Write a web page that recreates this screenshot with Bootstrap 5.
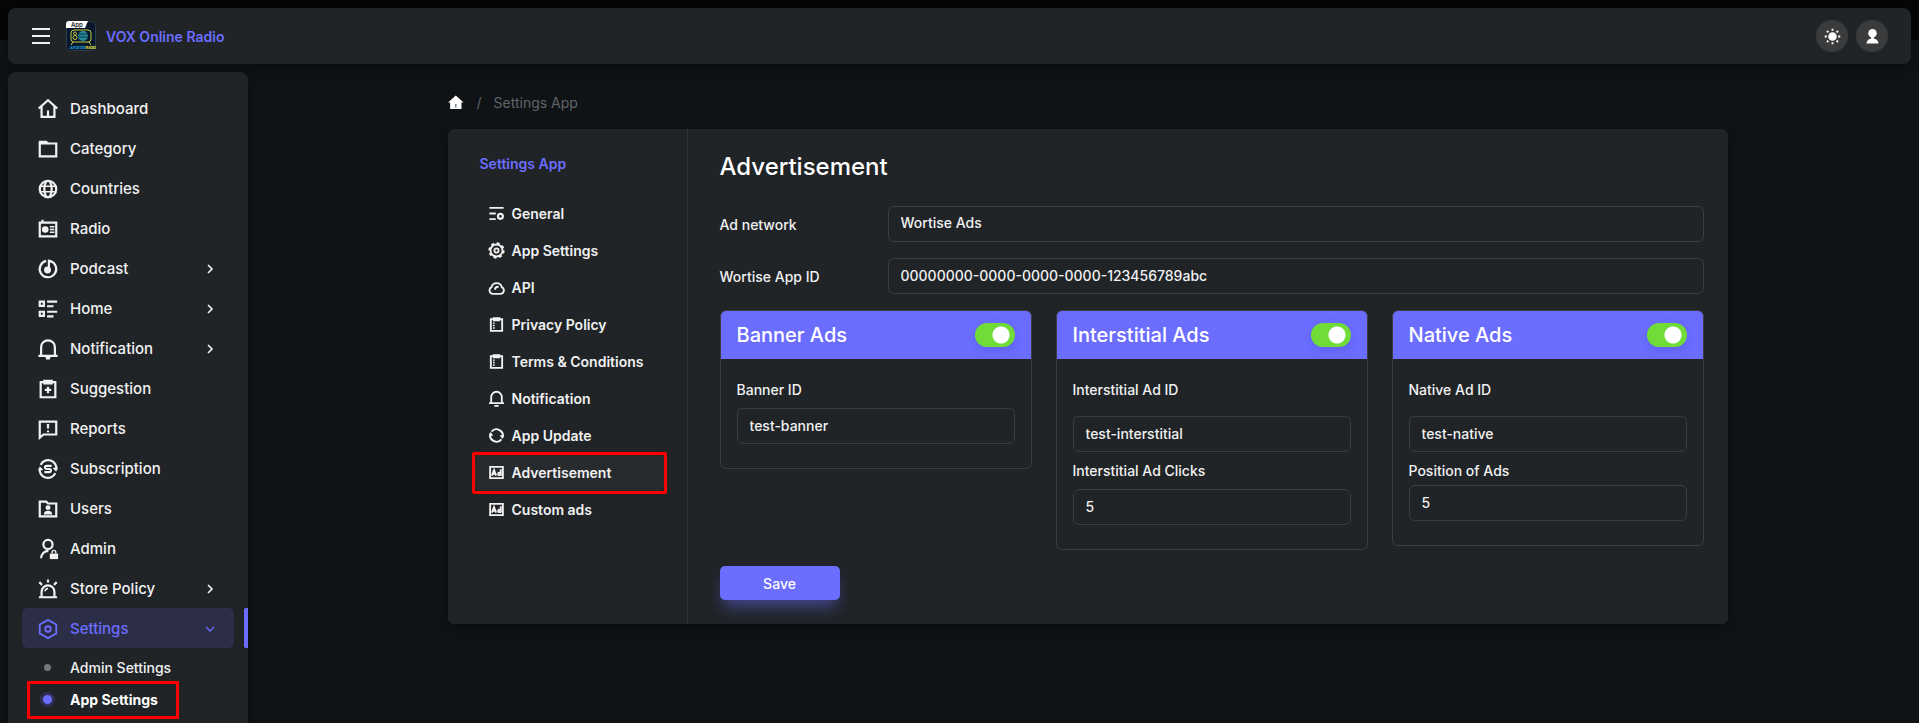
<!DOCTYPE html>
<html lang="en" data-bs-theme="dark">
<head>
<meta charset="utf-8">
<meta name="viewport" content="width=device-width, initial-scale=1">
<title>Settings App - VOX Online Radio</title>
<link href="https://cdn.jsdelivr.net/npm/bootstrap@5.3.0/dist/css/bootstrap.min.css" rel="stylesheet">
<style>
:root { --accent: #6b6dff; --panel: #202427; --line: #3a3d41; --mark-red: #ff0000; }
body { font-family: Inter, "Liberation Sans", sans-serif; font-size: 14px; font-weight: 500; line-height: 21px; color: #f1f1f2; background: linear-gradient(#050608 40px, #0f1316 40px); min-height: 100vh; }
a { color: inherit; text-decoration: none; }
h1, h2, p, ul { margin: 0; }
svg { display: block; flex: none; fill: none; stroke: currentColor; stroke-width: 2; }
.panel { background: var(--panel); box-shadow: 0 4px 12px rgba(0, 0, 0, .3); }
.topbar { height: 56px; border-radius: 8px; padding: 0 23px 0 24px; }
.menu-btn { width: 18px; height: 18px; color: #f1f1f2; }
.brand { font-weight: 600; color: var(--accent); gap: 10px; }
.round-btn { width: 32px; height: 32px; background: #3a3b3d; color: #fff; }
.side { width: 240px; border-radius: 8px 8px 0 0; padding: 16px 14px 0; }
.side-link { height: 40px; padding: 1px 16px 0 15px; gap: 11px; border-radius: 6px; font-size: 15px; }
.side-link svg { stroke-width: 2.400px; }
.side-link .go { width: 16px; height: 16px; margin-left: auto; }
.side-link.current { color: var(--accent); background: #2c2e48; }
.side-link.current svg { stroke-width: 2px; }
.side-link.current::after { content: ""; position: absolute; top: 0; right: -14px; width: 4px; height: 40px; background: var(--accent); border-radius: 2px 0 0 2px; }
.sub-link { height: 32px; padding: 0 18px 2px; gap: 15px; }
.dot { width: 15px; height: 15px; border-radius: 50%; background: #75777a; border: 4px solid var(--panel); }
.sub-link.current { font-weight: 700; color: #fff; }
.sub-link.current .dot { background: var(--accent); border: 3px solid #2f3056; }
.sub-link.current::after { content: ""; position: absolute; inset: -3px auto -3px 5px; width: 152px; border: 3px solid var(--mark-red); }
.page { width: 1280px; max-width: 100%; margin-top: 20px; }
.crumbs { color: #5f6469; font-weight: 400; height: 21px; gap: 12px; }
.card-main { border-radius: 6px; margin-top: 16px; min-height: 495px; }
.tabs { width: 240px; border-right: 1px solid #303438; padding: 24px 24px 24px 32px; }
.tabs-title { color: var(--accent); font-size: 14px; line-height: 21px; font-weight: 600; margin-bottom: 21px; }
.tab-link { height: 37px; gap: 7px; padding-left: 8px; font-weight: 600; border-radius: 6px; }
.tab-link svg { stroke-width: 2.600px; }
.tab-link.current::before { content: ""; position: absolute; inset: 0 -1px 0 -5px; background: #282b2e; border-radius: 6px; }
.tab-link.current::after { content: ""; position: absolute; inset: -2px -4px -3px -8px; border: 3px solid var(--mark-red); border-radius: 2px; }
.tab-link > * { position: relative; }
.pane { padding: 23px 24px 24px 32px; }
.pane h1 { font-size: 24px; line-height: 30px; font-weight: 500; color: #fff; margin-bottom: 24px; }
.field { height: 36px; padding: 6px 12px 8px; font-size: 14px; line-height: 20px; font-weight: 500; color: #f1f1f2; background: var(--panel); border: 1px solid var(--line); border-radius: 6px; }
.field:focus { background: var(--panel); color: #fff; border-color: var(--accent); box-shadow: none; }
select.field { background-image: none; }
.ad-card { border: 1px solid var(--line); border-radius: 6px; overflow: hidden; }
.ad-head { height: 48px; padding: 0 16px; background: var(--accent); }
.ad-head h2 { font-size: 20px; line-height: 24px; font-weight: 500; color: #fff; }
.ad-body { padding: 20px 16px 24px; }
.ad-body label { display: block; }
.form-check-input.toggle { width: 40px; height: 24px; margin: 0; border: 0; border-radius: 12px; background: #71dc37 radial-gradient(circle at 26px 12px, #fff 8px, transparent 9px) no-repeat; box-shadow: 0 3px 10px rgba(60, 60, 190, .25); }
.form-check-input.toggle:not(:checked) { background: #888 radial-gradient(circle at 14px 12px, #fff 8px, transparent 9px) no-repeat; }
.save { width: 120px; height: 34px; background: var(--accent); color: #fff; border: 0; border-radius: 5px; font-weight: 500; font-size: 14px; box-shadow: 0 10px 16px -4px rgba(107, 109, 255, .5); }
.save:hover { background: #5a5cf0; color: #fff; }
</style>
</head>
<body>
<svg width="0" height="0" class="position-absolute" aria-hidden="true">
  <symbol id="home" viewBox="0 0 24 24"><path d="M1.800 11.500 12 2.500l10.200 9M5 9v11.500h14V9M12 20.500v-7"/></symbol>
  <symbol id="folder" viewBox="0 0 24 24"><path d="M3 6v14h18V6z"/><path d="M2 3h8.500l3 3H2z" fill="currentColor" stroke="none"/></symbol>
  <symbol id="globe" viewBox="0 0 24 24"><circle cx="12" cy="12" r="9"/><ellipse cx="12" cy="12" rx="4" ry="9"/><path d="M3 9h18M3 15h18" stroke-width="1.800"/></symbol>
  <symbol id="radio" viewBox="0 0 24 24"><path d="M3 5h18v15H3zM6 5V2"/><circle cx="9" cy="12.500" r="3.600" fill="currentColor" stroke="none"/><path d="M14 9.500h5M14 12.500h5M14 15.500h5" stroke-width="1.600"/></symbol>
  <symbol id="music" viewBox="0 0 24 24"><path d="M10 3.200A9 9 0 1 0 15 3.500"/><path d="M13 13V3l3 1"/><circle cx="11.500" cy="13" r="2.600" fill="currentColor"/></symbol>
  <symbol id="list" viewBox="0 0 24 24"><path d="M3 4h4.500v4.500H3zM3 15h4.500v4.500H3zM11 4h11M11 9h7M11 15h11M11 20h7"/></symbol>
  <symbol id="bell" viewBox="0 0 24 24"><path d="M4.500 19v-9a7.500 7.500 0 0 1 15 0v9M1.500 19.500h21"/><path d="M9 20h6l-1 3.500h-4z" fill="currentColor" stroke="none"/></symbol>
  <symbol id="bell-s" viewBox="0 0 24 24"><path d="M4.500 18v-8a7.500 7.500 0 0 1 15 0v8M1.500 18.500h21M9 22.500h6"/></symbol>
  <symbol id="clip-plus" viewBox="0 0 24 24"><path d="M4 4.500h16V21H4zM8 3h8v3H8zM12 9.500v7M8.500 13h7"/></symbol>
  <symbol id="report" viewBox="0 0 24 24"><path d="M3 4h18v14H7l-4 3.500zM12 6.500v5M12 13.500v2"/></symbol>
  <symbol id="money" viewBox="0 0 24 24"><path d="M4 7.500A9 9 0 0 1 21 13M20 16.500A9 9 0 0 1 3 11"/><path d="m1.500 14 1.500-5 4 4zM22.500 10 21 15l-4-4z" fill="currentColor" stroke="none"/><path d="M16 8.500h-5.500a1.750 1.750 0 0 0 0 3.500h3a1.750 1.750 0 0 1 0 3.500H8"/></symbol>
  <symbol id="folder-user" viewBox="0 0 24 24"><path d="M3 20V4h7l2 2h9v14z"/><circle cx="12" cy="10.500" r="2.700" fill="currentColor" stroke="none"/><path d="M7.500 18a4.500 4 0 0 1 9 0z" fill="currentColor" stroke="none"/></symbol>
  <symbol id="admin" viewBox="0 0 24 24"><circle cx="12" cy="7" r="5"/><path d="M4.500 22a8 8 0 0 1 8-8"/><path d="M14 17h9v6h-9z" fill="currentColor" stroke="none"/><path d="M16.500 17v-1.500a2 2 0 0 1 4 0V17" stroke-width="1.500"/></symbol>
  <symbol id="alarm" viewBox="0 0 24 24"><path d="M5 21v-6a7 7 0 0 1 14 0v6M2 21h20M12 1.500V5M2.500 4.500l3 3M21.500 4.500l-3 3"/><path d="M8.500 14.500a4 4 0 0 1 3.500-3" stroke-width="1.600"/></symbol>
  <symbol id="hex" viewBox="0 0 24 24"><path d="m12 2 9 5v10l-9 5-9-5V7z"/><circle cx="12" cy="12" r="3"/></symbol>
  <symbol id="right" viewBox="0 0 24 24"><path d="m9 6 6 6-6 6"/></symbol>
  <symbol id="down" viewBox="0 0 24 24"><path d="m6 9 6 6 6-6"/></symbol>
  <symbol id="sliders" viewBox="0 0 24 24"><path d="M2 4h20M2 12h9M2 20h9"/><circle cx="17.500" cy="16" r="3.500" stroke-width="3"/></symbol>
  <symbol id="gear" viewBox="0 0 24 24"><circle cx="12" cy="12" r="8.500"/><circle cx="12" cy="12" r="10" stroke-width="3" stroke-dasharray="4 3.850"/><circle cx="12" cy="12" r="3"/></symbol>
  <symbol id="cloud" viewBox="0 0 24 24"><path d="M7 21a5 5 0 0 1-2-9.500 7.500 7.500 0 0 1 14.500 0A5 5 0 0 1 17 21zM10 15a4 4 0 0 1 4-4h1"/></symbol>
  <symbol id="clip-list" viewBox="0 0 24 24"><path d="M4 4.500h16V21H4zM8 3h8v3H8z"/><path d="M7 10h2.500M7 13.500h2.500M7 17h2.500" stroke-width="2"/></symbol>
  <symbol id="sync" viewBox="0 0 24 24"><path d="M5 6.500A9 9 0 0 1 20.500 15M19 17.500A9 9 0 0 1 3.500 9"/><path d="m1.500 13 2-6 4 5zM22.500 11l-2 6-4-5z" fill="currentColor" stroke="none"/></symbol>
  <symbol id="ad" viewBox="0 0 24 24"><path d="M3 4h18v16H3z"/><path d="m5.500 16.500 3-8 3 8M7 14h3.500M18 7.500v9"/><circle cx="16" cy="14" r="1.800"/></symbol>
  <symbol id="home-fill" viewBox="0 0 24 24"><path d="M11 2 0 12h3v9h16v-9h3z" fill="currentColor" stroke="none"/><path d="M11 14v5" stroke="#77797b"/></symbol>
  <symbol id="sun" viewBox="0 0 24 24"><circle cx="12" cy="12" r="6" fill="currentColor" stroke="none"/><path d="M12 1v3M12 20v3M1 12h3M20 12h3M4.200 4.200l2 2M17.800 17.800l2 2M4.200 19.800l2-2M17.800 6.200l2-2" stroke-width="2.600"/></symbol>
  <symbol id="user" viewBox="0 0 24 24"><circle cx="12" cy="7.500" r="6" fill="currentColor" stroke="none"/><path d="M10 12h4v4h-4zM3.500 22a8.500 7.500 0 0 1 17 0z" fill="currentColor" stroke="none"/></symbol>
</svg>

<div class="p-2 pb-0 d-flex flex-column min-vh-100">
  <header class="topbar panel d-flex align-items-center position-relative">
    <button class="menu-btn btn p-0 border-0" type="button" aria-label="Toggle menu"><svg width="18" height="18" viewBox="0 0 18 18"><path d="M0 2h18M0 9h18M0 16h18"/></svg></button>
    <a href="#" class="d-flex align-items-center ms-3 brand">
      <svg width="30" height="30" viewBox="0 0 30 30" stroke="none" aria-hidden="true">
        <rect x=".5" y=".5" width="29" height="29" rx="5" fill="#06182a" stroke="#2b3e4d" stroke-width="1"/>
        <rect x="5" y="9" width="20" height="12" rx="3" fill="none" stroke="#c4c943" stroke-width="1"/>
        <path d="M7 21l-2 3M23 21l2 3" stroke="#c4c943" stroke-width="1"/>
        <circle cx="17" cy="15" r="5" fill="#278b9d" stroke="none"/><path d="M12 13h10M12 16h10" stroke="#0a3240" stroke-width="1"/>
        <circle cx="9" cy="12.500" r="1.500" stroke="#c4c943" stroke-width="1"/><circle cx="9" cy="16.500" r="2" stroke="#c4c943" stroke-width="1"/>
        <path d="M0 7V3a3 3 0 0 1 3-3h19l-3 7z" fill="#fff" stroke="none"/>
        <text x="5" y="6" font-size="6" font-weight="600" fill="#222" stroke="none">App</text>
        <text x="4" y="28" font-size="4" font-weight="700" fill="#1b9fd8" stroke="none">Android<tspan fill="#e6e04a">Radio</tspan></text>
      </svg>
      <span>VOX Online Radio</span>
    </a>
    <button class="round-btn btn p-0 border-0 rounded-circle d-flex align-items-center justify-content-center ms-auto" type="button" aria-label="Switch theme"><svg width="17" height="17"><use href="#sun"/></svg></button>
    <button class="round-btn btn p-0 border-0 rounded-circle d-flex align-items-center justify-content-center ms-2" type="button" aria-label="Account"><svg width="17" height="17"><use href="#user"/></svg></button>
  </header>

  <div class="d-flex flex-grow-1 mt-2">
    <nav class="side panel flex-shrink-0" aria-label="Main">
      <ul class="list-unstyled">
        <li><a href="#" class="side-link d-flex align-items-center"><svg width="22" height="22"><use href="#home"/></svg>Dashboard</a></li>
        <li><a href="#" class="side-link d-flex align-items-center"><svg width="22" height="22"><use href="#folder"/></svg>Category</a></li>
        <li><a href="#" class="side-link d-flex align-items-center"><svg width="22" height="22"><use href="#globe"/></svg>Countries</a></li>
        <li><a href="#" class="side-link d-flex align-items-center"><svg width="22" height="22"><use href="#radio"/></svg>Radio</a></li>
        <li><a href="#" class="side-link d-flex align-items-center"><svg width="22" height="22"><use href="#music"/></svg>Podcast<svg class="go"><use href="#right"/></svg></a></li>
        <li><a href="#" class="side-link d-flex align-items-center"><svg width="22" height="22"><use href="#list"/></svg>Home<svg class="go"><use href="#right"/></svg></a></li>
        <li><a href="#" class="side-link d-flex align-items-center"><svg width="22" height="22"><use href="#bell"/></svg>Notification<svg class="go"><use href="#right"/></svg></a></li>
        <li><a href="#" class="side-link d-flex align-items-center"><svg width="22" height="22"><use href="#clip-plus"/></svg>Suggestion</a></li>
        <li><a href="#" class="side-link d-flex align-items-center"><svg width="22" height="22"><use href="#report"/></svg>Reports</a></li>
        <li><a href="#" class="side-link d-flex align-items-center"><svg width="22" height="22"><use href="#money"/></svg>Subscription</a></li>
        <li><a href="#" class="side-link d-flex align-items-center"><svg width="22" height="22"><use href="#folder-user"/></svg>Users</a></li>
        <li><a href="#" class="side-link d-flex align-items-center"><svg width="22" height="22"><use href="#admin"/></svg>Admin</a></li>
        <li><a href="#" class="side-link d-flex align-items-center"><svg width="22" height="22"><use href="#alarm"/></svg>Store Policy<svg class="go"><use href="#right"/></svg></a></li>
        <li><a href="#" class="side-link current position-relative d-flex align-items-center"><svg width="22" height="22"><use href="#hex"/></svg>Settings<svg class="go"><use href="#down"/></svg></a>
          <ul class="list-unstyled pt-1">
            <li><a href="#" class="sub-link d-flex align-items-center"><span class="dot"></span>Admin Settings</a></li>
            <li><a href="#" class="sub-link current position-relative d-flex align-items-center"><span class="dot"></span>App Settings</a></li>
          </ul>
        </li>
      </ul>
    </nav>

    <main class="flex-grow-1 ps-3">
      <div class="page mx-auto">
        <nav class="crumbs d-flex align-items-center" aria-label="Breadcrumb">
          <a href="#" aria-label="Home" class="text-white"><svg width="17" height="17"><use href="#home-fill"/></svg></a><span>/</span><span>Settings App</span>
        </nav>

        <div class="card-main panel d-flex">
          <nav class="tabs flex-shrink-0" aria-label="Settings">
            <h2 class="tabs-title">Settings App</h2>
            <a href="#" class="tab-link d-flex align-items-center"><svg width="17" height="17"><use href="#sliders"/></svg><span>General</span></a>
            <a href="#" class="tab-link d-flex align-items-center"><svg width="17" height="17"><use href="#gear"/></svg><span>App Settings</span></a>
            <a href="#" class="tab-link d-flex align-items-center"><svg width="17" height="17"><use href="#cloud"/></svg><span>API</span></a>
            <a href="#" class="tab-link d-flex align-items-center"><svg width="17" height="17"><use href="#clip-list"/></svg><span>Privacy Policy</span></a>
            <a href="#" class="tab-link d-flex align-items-center"><svg width="17" height="17"><use href="#clip-list"/></svg><span>Terms &amp; Conditions</span></a>
            <a href="#" class="tab-link d-flex align-items-center"><svg width="17" height="17"><use href="#bell-s"/></svg><span>Notification</span></a>
            <a href="#" class="tab-link d-flex align-items-center"><svg width="17" height="17"><use href="#sync"/></svg><span>App Update</span></a>
            <a href="#" class="tab-link current position-relative d-flex align-items-center"><svg width="17" height="17"><use href="#ad"/></svg><span>Advertisement</span></a>
            <a href="#" class="tab-link d-flex align-items-center"><svg width="17" height="17"><use href="#ad"/></svg><span>Custom ads</span></a>
          </nav>

          <form class="pane flex-grow-1">
            <h1>Advertisement</h1>
            <div class="row align-items-center mb-3">
              <label for="network" class="col-2">Ad network</label>
              <div class="col-10"><select id="network" class="form-select field"><option>Wortise Ads</option></select></div>
            </div>
            <div class="row align-items-center mb-3">
              <label for="appid" class="col-2">Wortise App ID</label>
              <div class="col-10"><input id="appid" type="text" class="form-control field" value="00000000-0000-0000-0000-123456789abc"></div>
            </div>
            <div class="row align-items-start">
              <div class="col-4">
                <section class="ad-card">
                  <div class="ad-head d-flex align-items-center justify-content-between"><h2>Banner Ads</h2><input class="form-check-input toggle" type="checkbox" role="switch" aria-label="Banner Ads" checked></div>
                  <div class="ad-body">
                    <label for="banner" class="mb-2">Banner ID</label>
                    <input id="banner" type="text" class="form-control field" value="test-banner">
                  </div>
                </section>
              </div>
              <div class="col-4">
                <section class="ad-card">
                  <div class="ad-head d-flex align-items-center justify-content-between"><h2>Interstitial Ads</h2><input class="form-check-input toggle" type="checkbox" role="switch" aria-label="Interstitial Ads" checked></div>
                  <div class="ad-body">
                    <label for="inter" class="mb-3">Interstitial Ad ID</label>
                    <input id="inter" type="text" class="form-control field mb-2" value="test-interstitial">
                    <label for="clicks" class="mb-2">Interstitial Ad Clicks</label>
                    <input id="clicks" type="text" class="form-control field" value="5">
                  </div>
                </section>
              </div>
              <div class="col-4">
                <section class="ad-card">
                  <div class="ad-head d-flex align-items-center justify-content-between"><h2>Native Ads</h2><input class="form-check-input toggle" type="checkbox" role="switch" aria-label="Native Ads" checked></div>
                  <div class="ad-body">
                    <label for="native" class="mb-3">Native Ad ID</label>
                    <input id="native" type="text" class="form-control field mb-2" value="test-native">
                    <label for="position" class="mb-1">Position of Ads</label>
                    <input id="position" type="text" class="form-control field" value="5">
                  </div>
                </section>
              </div>
            </div>
            <button type="submit" class="btn save mt-3 p-0 d-block">Save</button>
          </form>
        </div>
      </div>
    </main>
  </div>
</div>
<script src="https://cdn.jsdelivr.net/npm/bootstrap@5.3.0/dist/js/bootstrap.bundle.min.js"></script>
</body>
</html>
